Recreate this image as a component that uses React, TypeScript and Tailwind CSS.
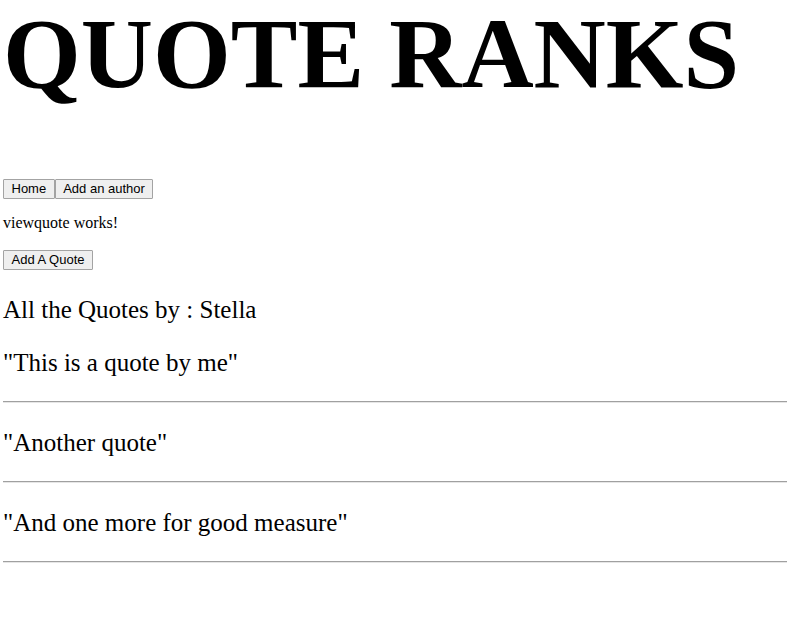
import React from "react";

const quotes = ['"This is a quote by me"', '"Another quote"', '"And one more for good measure"'];

function Btn({ children }: { children: React.ReactNode }) {
  return (
    <button className="h-[20px] px-[7.5px] border border-[#a3a3a3] bg-[#efefef] text-[13px] leading-[18px] text-black font-['Liberation_Sans',Arial,sans-serif] rounded-[1px]">
      {children}
    </button>
  );
}

export default function App() {
  return (
    <div className="bg-white min-h-[635px] pl-[3px] pr-[1px] text-black font-['Liberation_Serif','Times_New_Roman',serif]">
      <h1 className="text-[100px] font-bold leading-[108px]">QUOTE RANKS</h1>
      <div className="flex mt-[71px]">
        <Btn>Home</Btn>
        <Btn>Add an author</Btn>
      </div>
      <p className="text-[16px] leading-[18px] mt-[15px]">viewquote works!</p>
      <div className="mt-[15px]">
        <Btn>Add A Quote</Btn>
      </div>
      <h2 className="text-[25px] leading-[29px] mt-[24px]">All the Quotes by : Stella</h2>
      {quotes.map((q, i) => (
        <div key={q}>
          <p className={i === 0 ? "text-[25px] leading-[29px] mt-[24px]" : "text-[25px] leading-[29px] mt-[25px]"}>{q}</p>
          <div className="mt-[24px] border-t border-t-[#a0a0a0] border-b border-b-[#e6e6e6]" />
        </div>
      ))}
    </div>
  );
}
